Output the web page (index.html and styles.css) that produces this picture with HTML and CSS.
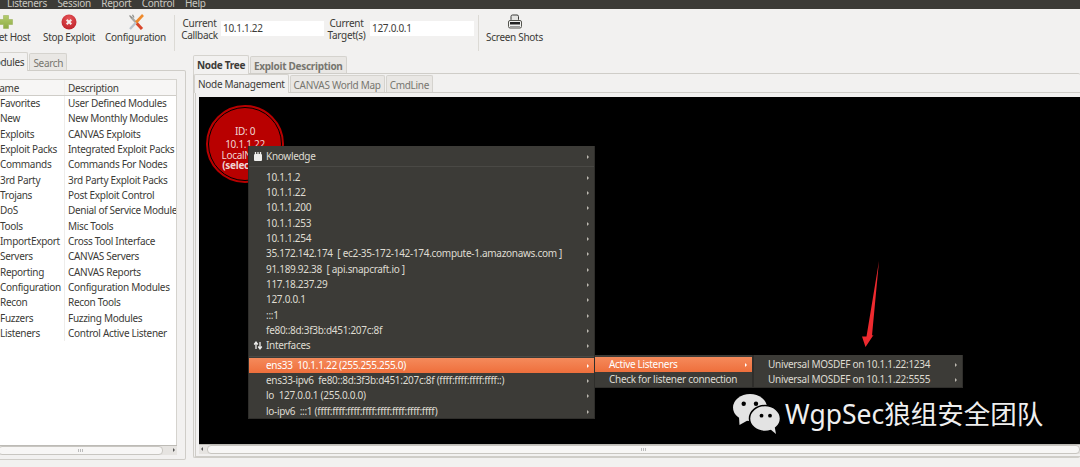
FILE: index.html
```html
<!DOCTYPE html>
<html lang="en">
<head>
  <meta charset="UTF-8" />
  <title>CANVAS</title>
  <link rel="stylesheet" href="styles.css">
</head>
<body>
  <!-- Menu bar -->
  <div class="menubar">
    <span>Listeners</span><span>Session</span><span>Report</span><span>Control</span><span>Help</span>
  </div>

  <!-- Toolbar -->
  <div class="toolbar">
    <div class="tool tool-host">
      <svg width="16" height="16" viewBox="0 0 16 16">
        <defs><linearGradient id="plusFill" x1="0" y1="0" x2="0" y2="1"><stop offset="0" stop-color="#b4cc6c"/><stop offset="1" stop-color="#8dab45"/></linearGradient></defs>
        <path d="M5.500 1.500h5v4h4v5h-4v4h-5v-4h-4v-5h4z" fill="url(#plusFill)" stroke="#9cb25c" stroke-width=".6"/>
      </svg>
      <span>Get Host</span>
    </div>
    <div class="tool tool-stop">
      <svg width="16" height="16" viewBox="0 0 16 16">
        <defs><radialGradient id="stopFill" cx=".5" cy=".3" r=".8"><stop offset="0" stop-color="#e8565a"/><stop offset="1" stop-color="#b81c24"/></radialGradient></defs>
        <circle cx="8" cy="8" r="7.500" fill="url(#stopFill)"/>
        <path d="M5.700 5.700l4.600 4.600M10.300 5.700l-4.600 4.600" stroke="#f6eeee" stroke-width="2"/>
      </svg>
      <span>Stop Exploit</span>
    </div>
    <div class="tool tool-config">
      <svg width="18" height="16" viewBox="0 0 18 16">
        <path d="M4 3L9 8.500" stroke="#a9aaa6" stroke-width="2.400"/>
        <path d="M2.500 1.500L5 4M5.500 .8L7 3.500" stroke="#8e8f8b" stroke-width="1.300" fill="none"/>
        <path d="M9 8.500L15 15" stroke="#d8452a" stroke-width="3"/>
        <path d="M16 1L9 8.500" stroke="#ee8a2c" stroke-width="2.600"/>
        <path d="M9 8.500L3 15" stroke="#b9c3cc" stroke-width="2.400"/>
      </svg>
      <span>Configuration</span>
    </div>
    <div class="tool-sep"></div>
    <label class="field-label field-callback">Current<br>Callback</label>
    <div class="field">10.1.1.22</div>
    <label class="field-label field-target">Current<br>Target(s)</label>
    <div class="field field-wide">127.0.0.1</div>
    <div class="tool-sep sep-right"></div>
    <div class="tool tool-shots">
      <svg width="16" height="16" viewBox="0 0 16 16">
        <rect x="4" y="1" width="7.500" height="6" rx="1.500" fill="#e4e4e2" stroke="#3a3a38"/>
        <rect x="1.500" y="6.500" width="13" height="7.500" rx="1.500" fill="#f1f1ef" stroke="#55554f"/>
        <rect x="3" y="8" width="10" height="2.500" fill="#222"/>
        <rect x="3" y="12" width="10" height="1" fill="#999"/>
      </svg>
      <span>Screen Shots</span>
    </div>
  </div>

  <div class="panes">
    <!-- Left: module list -->
    <div class="left">
      <div class="tabs left-tabs">
        <div class="tab active tab-modules">Modules</div>
        <div class="tab">Search</div>
      </div>
      <div class="frame left-frame">
        <div class="tree">
          <div class="tree-head">
            <div class="col-name">Name</div>
            <div class="col-desc">Description</div>
          </div>
          <div class="tree-body">
            <div class="row"><div class="col-name">Favorites</div><div class="col-desc">User Defined Modules</div></div>
            <div class="row"><div class="col-name">New</div><div class="col-desc">New Monthly Modules</div></div>
            <div class="row"><div class="col-name">Exploits</div><div class="col-desc">CANVAS Exploits</div></div>
            <div class="row"><div class="col-name">Exploit Packs</div><div class="col-desc">Integrated Exploit Packs</div></div>
            <div class="row"><div class="col-name">Commands</div><div class="col-desc">Commands For Nodes</div></div>
            <div class="row"><div class="col-name">3rd Party</div><div class="col-desc">3rd Party Exploit Packs</div></div>
            <div class="row"><div class="col-name">Trojans</div><div class="col-desc">Post Exploit Control</div></div>
            <div class="row"><div class="col-name">DoS</div><div class="col-desc">Denial of Service Modules</div></div>
            <div class="row"><div class="col-name">Tools</div><div class="col-desc">Misc Tools</div></div>
            <div class="row"><div class="col-name">ImportExport</div><div class="col-desc">Cross Tool Interface</div></div>
            <div class="row"><div class="col-name">Servers</div><div class="col-desc">CANVAS Servers</div></div>
            <div class="row"><div class="col-name">Reporting</div><div class="col-desc">CANVAS Reports</div></div>
            <div class="row"><div class="col-name">Configuration</div><div class="col-desc">Configuration Modules</div></div>
            <div class="row"><div class="col-name">Recon</div><div class="col-desc">Recon Tools</div></div>
            <div class="row"><div class="col-name">Fuzzers</div><div class="col-desc">Fuzzing Modules</div></div>
            <div class="row"><div class="col-name">Listeners</div><div class="col-desc">Control Active Listener</div></div>
          </div>
        </div>
        <div class="hscroll">
          <div class="thumb"><i class="grip"></i></div>
          <div class="step step-right"></div>
        </div>
      </div>
    </div>

    <div class="handle"></div>

    <!-- Right: node tree -->
    <div class="right">
      <div class="tabs right-tabs">
        <div class="tab active bold">Node Tree</div>
        <div class="tab bold">Exploit Description</div>
      </div>
      <div class="frame right-frame">
        <div class="tabs inner-tabs">
          <div class="tab active">Node Management</div>
          <div class="tab">CANVAS World Map</div>
          <div class="tab">CmdLine</div>
        </div>
        <div class="inner-frame">
          <div class="canvas"></div>
          <div class="hscroll">
            <div class="step step-left"></div>
            <div class="thumb"><i class="grip"></i></div>
          </div>
        </div>
      </div>
    </div>
  </div>

  <!-- Node on the canvas -->
  <div class="node">
    <div class="node-id">ID: 0</div>
    <div class="node-ip">10.1.1.22</div>
    <div>LocalNode</div>
    <div class="bold">(selected)</div>
  </div>

  <!-- Context menu -->
  <div class="menu menu-main">
    <div class="item has-icon">
      <svg class="item-icon" width="10" height="11" viewBox="0 0 10 11"><rect x="1" y="3" width="8" height="7" rx="1" fill="#eeeeec"/><path d="M2.500 1v2M5 1v2M7.500 1v2" stroke="#eeeeec" stroke-width="1.300"/></svg>
      Knowledge
    </div>
    <div class="menu-sep"></div>
    <div class="item">10.1.1.2</div>
    <div class="item">10.1.1.22</div>
    <div class="item">10.1.1.200</div>
    <div class="item">10.1.1.253</div>
    <div class="item">10.1.1.254</div>
    <div class="item">35.172.142.174&nbsp; [ ec2-35-172-142-174.compute-1.amazonaws.com ]</div>
    <div class="item">91.189.92.38&nbsp; [ api.snapcraft.io ]</div>
    <div class="item">117.18.237.29</div>
    <div class="item">127.0.0.1</div>
    <div class="item">:::1</div>
    <div class="item">fe80::8d:3f3b:d451:207c:8f</div>
    <div class="item has-icon">
      <svg class="item-icon" width="10" height="11" viewBox="0 0 10 11"><path d="M3 9V3M1.200 4.500L3 2l1.800 2.500M7 2v6M5.200 6.500L7 9l1.800-2.500" fill="none" stroke="#eeeeec" stroke-width="1.300"/></svg>
      Interfaces
    </div>
    <div class="menu-sep tight"></div>
    <div class="item hot">ens33&nbsp; 10.1.1.22 (255.255.255.0)</div>
    <div class="item">ens33-ipv6&nbsp; fe80::8d:3f3b:d451:207c:8f (ffff:ffff:ffff:ffff::)</div>
    <div class="item">lo&nbsp; 127.0.0.1 (255.0.0.0)</div>
    <div class="item">lo-ipv6&nbsp; :::1 (ffff:ffff:ffff:ffff:ffff:ffff:ffff:ffff)</div>
  </div>

  <div class="menu menu-sub">
    <div class="item hot">Active Listeners</div>
    <div class="item no-arrow">Check for listener connection</div>
  </div>

  <div class="menu menu-sub2">
    <div class="item">Universal MOSDEF on 10.1.1.22:1234</div>
    <div class="item">Universal MOSDEF on 10.1.1.22:5555</div>
  </div>

  <!-- Red arrow annotation -->
  <svg class="annot" width="40" height="92" viewBox="0 0 40 92">
    <path d="M27 1L20 75.500 21.500 75 13.500 87 10 76.500 14.500 76.500z" fill="#ee2a2f"/>
  </svg>

  <!-- Watermark -->
  <div class="mark">
    <svg width="48" height="42" viewBox="0 0 48 42">
      <ellipse cx="17" cy="14.500" rx="17" ry="13.500" fill="#e3e3e3"/>
      <path d="M6 24l.5 8 8-4.500z" fill="#e3e3e3"/>
      <ellipse cx="32" cy="25.500" rx="15.500" ry="13" fill="#e3e3e3" stroke="#000" stroke-width="1.500"/>
      <path d="M37 36l6 5-1.500-8z" fill="#e3e3e3"/>
      <circle cx="10.700" cy="10.700" r="2.200" fill="#000"/>
      <circle cx="23" cy="10.700" r="2.200" fill="#000"/>
      <circle cx="28.500" cy="22.700" r="1.900" fill="#000"/>
      <circle cx="37" cy="22.700" r="1.900" fill="#000"/>
    </svg>
    <span>WgpSec狼组安全团队</span>
  </div>
</body>
</html>
```

FILE: styles.css
```css
html, body {
  margin: 0;
  height: 467px;
  overflow: hidden;
}
body {
  position: relative;
  width: 1080px;
  background-color: #f2f1f0;
  color: #3c3b37;
  font-family: "Noto Sans", sans-serif;
  font-size: 10px;
  letter-spacing: -0.3px;
  line-height: 15.33px;
}
.bold {
  font-weight: bold;
}

/* Menu bar */
.menubar {
  display: flex;
  height: 9px;
  padding-left: 7px;
  overflow: hidden;
  background-color: #3c3b37;
  color: #c9c7c0;
  line-height: 6px;
  box-sizing: border-box;
}
.menubar span {
  margin-right: 10.500px;
}

/* Toolbar */
.toolbar {
  display: flex;
  align-items: flex-start;
  height: 45px;
}
.tool {
  display: flex;
  flex-direction: column;
  align-items: center;
  padding-top: 5px;
  white-space: nowrap;
}
.tool-host {
  width: 46px;
  margin-left: -12px;
}
.tool-host svg {
  margin-right: 10px;
}
.tool-stop {
  width: 54px;
  margin-left: 8px;
}
.tool-config {
  width: 61px;
  margin-left: 9px;
}
.tool-sep {
  width: 1px;
  height: 36px;
  margin: 6px 0 0 8px;
  background-color: #dcdad5;
}
.field-label {
  margin: 7.500px 0 0 6px;
  text-align: center;
  line-height: 12px;
  width: 37px;
}
.field-target {
  width: 39px;
  margin-left: 3px;
}
.field {
  width: 103px;
  height: 15px;
  margin: 12px 0 0 3px;
  padding-left: 2px;
  box-sizing: border-box;
  background-color: #fff;
  line-height: 15px;
}
.field-wide {
  width: 104px;
  margin-left: 4px;
}
.sep-right {
  margin-left: 4px;
}
.tool-shots {
  width: 57px;
  margin-left: 7px;
}

/* Panes */
.panes {
  display: flex;
  height: 413px;
}
.left {
  width: 186px;
  flex: none;
}
.handle {
  width: 7px;
  flex: none;
}
.right {
  flex: 1;
  min-width: 0;
}

/* Tabs */
.tabs {
  display: flex;
  align-items: flex-end;
}
.tab {
  padding: 0 3px;
  height: 16px;
  margin-right: 1px;
  border: 1px solid #d5d3ce;
  border-bottom: none;
  border-radius: 2px 2px 0 0;
  background-color: #e9e7e4;
  color: #77766f;
  line-height: 18px;
  white-space: nowrap;
}
.tab.active {
  height: 18px;
  background-color: #f2f1f0;
  color: #3c3b37;
  position: relative;
  top: 1px;
  line-height: 19px;
}
.left-tabs {
  height: 16px;
}
.tab-modules {
  margin-left: -18px;
}
.right-tabs {
  height: 19px;
}
.inner-tabs {
  height: 18px;
  margin-left: -1px;
}

/* Frames */
.frame {
  box-sizing: border-box;
  border: 1px solid #cfcdc8;
  border-radius: 2px;
}
.left-frame {
  height: 390px;
  padding-top: 8px;
  margin-left: -2px;
  border-left: none;
}
.left-frame .tree {
  height: 366px;
}
.left-frame .hscroll {
  margin-right: 8px;
}
.tree {
  margin-right: 8px;
  padding-left: 2px;
  background-color: #fff;
  border-top: 1px solid #d5d3ce;
  border-right: 1px solid #d5d3ce;
  overflow: hidden;
  box-sizing: border-box;
}
.tree-head {
  display: flex;
  height: 16px;
  line-height: 16px;
  box-sizing: border-box;
  border-bottom: 1px solid #cfcdc8;
  background-color: #f7f6f5;
}
.row {
  display: flex;
  height: 15.33px;
}
.col-name {
  width: 65px;
  flex: none;
  white-space: nowrap;
  overflow: hidden;
  box-sizing: border-box;
  border-right: 1px solid #eeedeb;
}
.tree-head .col-name {
  text-indent: -8px;
}
.col-desc {
  padding-left: 3px;
  white-space: nowrap;
}
.right-frame {
  height: 385px;
  border-right: none;
  padding-left: 1px;
}
.inner-frame {
  box-sizing: border-box;
  height: 365px;
  padding: 4px 0 0 3px;
  border-top: 1px solid #cfcdc8;
  border-left: 1px solid #cfcdc8;
  border-bottom: 1px solid #cfcdc8;
}
.canvas {
  height: 347px;
  background-color: #000;
}

/* Scrollbars */
.hscroll {
  display: flex;
  height: 9px;
  border-top: 1px solid #bdbbb6;
  background-color: #e6e4e1;
}
.thumb {
  flex: 1;
  display: flex;
  align-items: center;
  justify-content: center;
  background-color: #f7f6f5;
  border: 1px solid #c8c6c1;
  border-radius: 4px;
}
.grip {
  width: 5px;
  height: 3px;
  background: repeating-linear-gradient(90deg, #bbb 0 1px, transparent 1px 2px);
}
.step {
  width: 14px;
  flex: none;
  position: relative;
}
.step-left {
  width: 8px;
}
.step::after {
  content: "";
  position: absolute;
  top: 2px;
  border: 2px solid transparent;
}
.step-right::after {
  right: 2px;
  border-left-color: #555;
  border-right: none;
}
.step-left::after {
  left: 2px;
  border-right-color: #555;
  border-left: none;
}

/* Node */
.node {
  position: absolute;
  left: 206px;
  top: 105px;
  width: 78px;
  height: 78px;
  padding-top: 20px;
  box-sizing: border-box;
  border: 2px solid #b80000;
  outline: 1px solid #000;
  outline-offset: -3px;
  border-radius: 50%;
  background-color: #b80000;
  color: #f0d4d4;
  line-height: 9.500px;
  text-align: center;
  white-space: nowrap;
}
.node-id {
  margin-bottom: 3.500px;
}
.node-ip {
  margin-bottom: 1.500px;
}

/* Context menus */
.menu {
  position: absolute;
  box-sizing: border-box;
  padding: 2.500px 0 0;
  background-color: #3c3b37;
  color: #dfdbd2;
  border: 1px solid #2f2e2b;
  border-width: 0 1px 1px 1px;
}
.menu-main {
  left: 248px;
  top: 146px;
  width: 347px;
  height: 273px;
}
.menu-sub {
  left: 594px;
  top: 355px;
  width: 159px;
  height: 33px;
  padding-top: 1.500px;
}
.menu-sub2 {
  left: 753px;
  top: 355px;
  width: 210px;
  height: 33px;
  padding-top: 1.500px;
}
.item {
  position: relative;
  height: 15.33px;
  padding-left: 17px;
  white-space: nowrap;
}
.menu-sub .item, .menu-sub2 .item {
  padding-left: 14px;
}
.item::after {
  content: "";
  position: absolute;
  right: 5px;
  top: 6px;
  border: 2px solid transparent;
  border-left-color: #bdbab2;
  border-right: none;
}
.item.no-arrow::after {
  display: none;
}
.item-icon {
  position: absolute;
  left: 4px;
  top: 2px;
}
.hot {
  background: linear-gradient(#f58a5b, #ee6f3c);
  color: #fff;
}
.hot::after {
  border-left-color: #fff;
}
.menu-sep {
  height: 1px;
  margin: 2.500px 0;
  background-color: #4a4945;
}
.menu-sep.tight {
  margin: 2px 0 1px;
}

/* Overlays */
.annot {
  position: absolute;
  left: 852px;
  top: 260px;
}
.mark {
  position: absolute;
  left: 733px;
  top: 393px;
  display: flex;
  align-items: center;
  gap: 4px;
  color: #efefef;
  font-family: "Noto Sans", "Noto Sans CJK SC", sans-serif;
  font-size: 26.500px;
  letter-spacing: 0;
  line-height: 42px;
  white-space: nowrap;
}
```
